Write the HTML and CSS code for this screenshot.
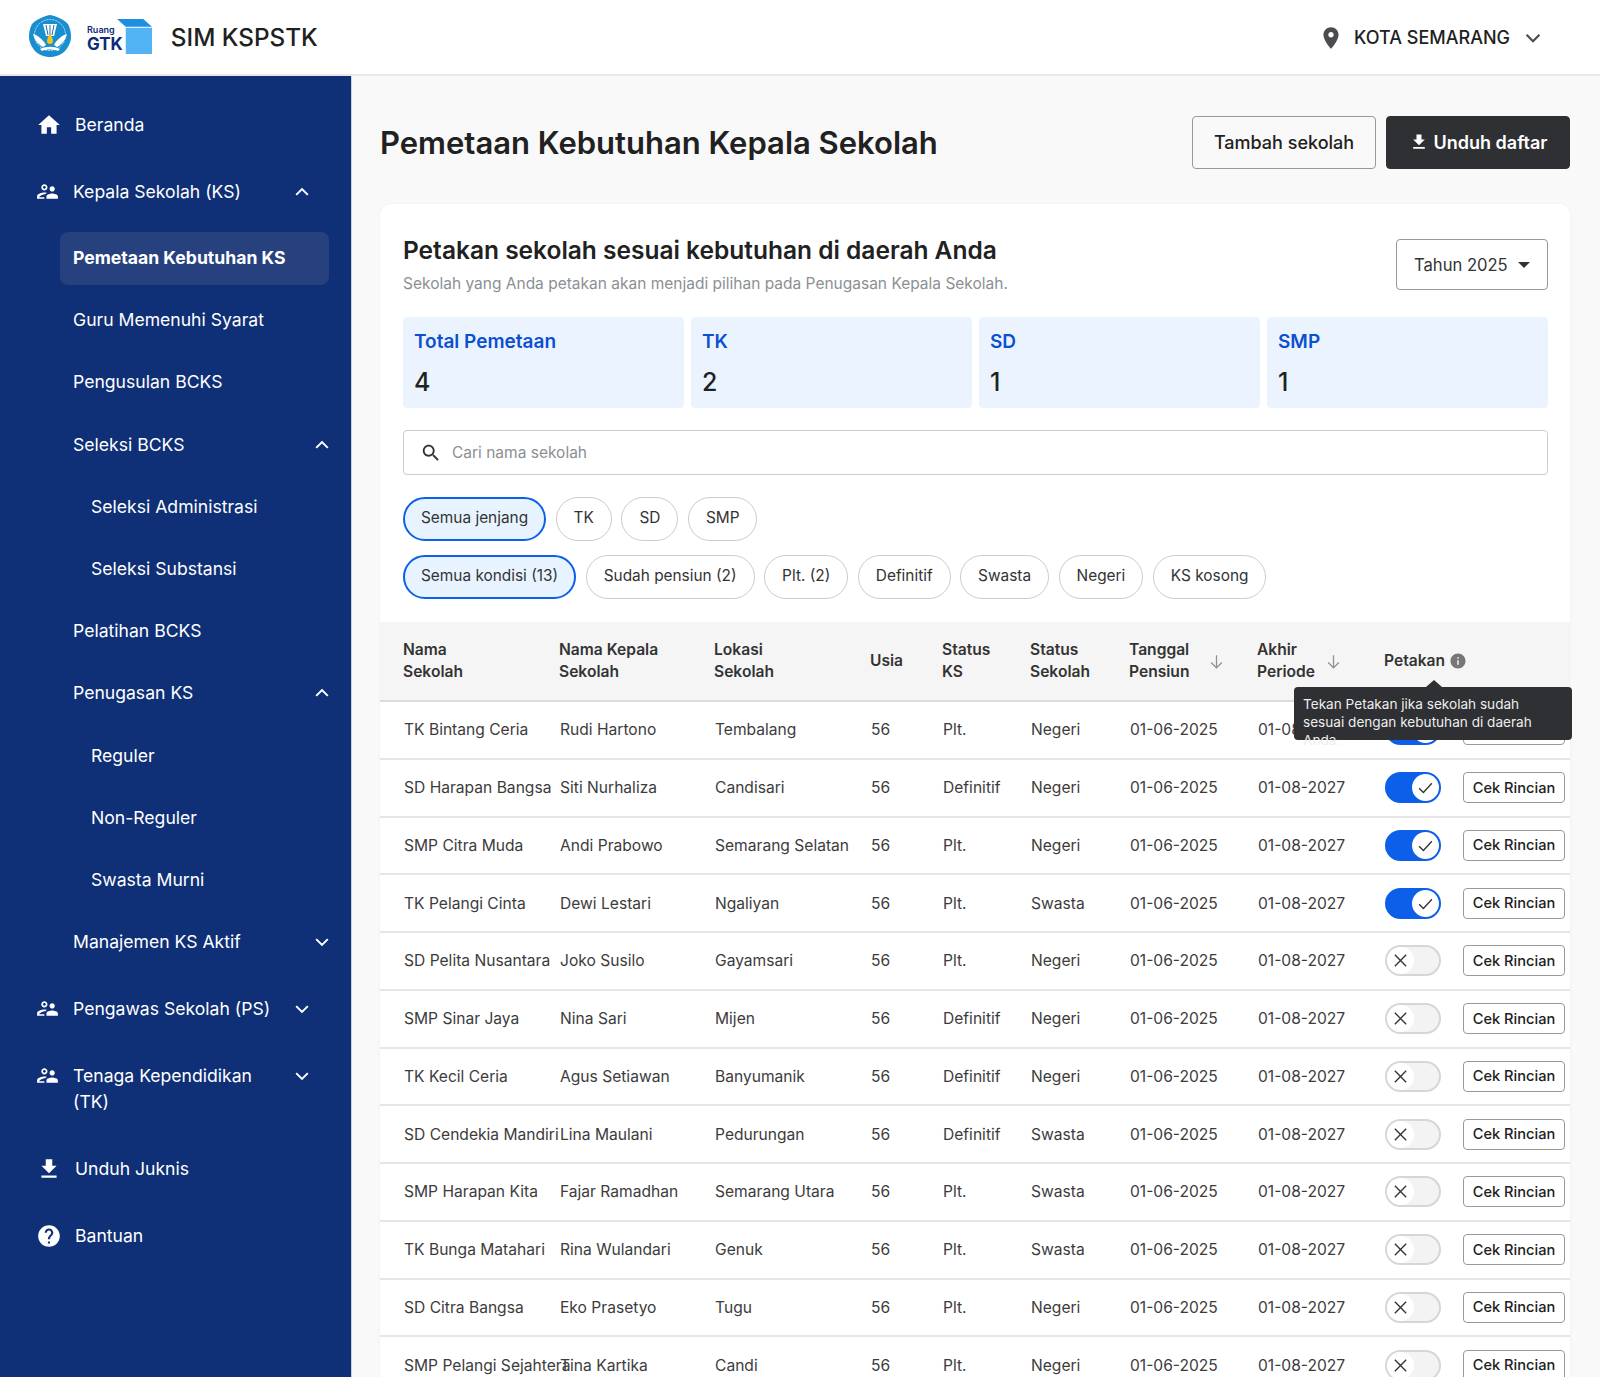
FILE: index.html
```html
<!DOCTYPE html>
<html lang="id">
<head>
    <meta charset="UTF-8">
    <meta name="viewport" content="width=device-width, initial-scale=1.0">
    <title>SIM KSPSTK</title>
    <link rel="stylesheet" href="styles.css">
</head>
<body>
    <svg class="sprites" aria-hidden="true">
        <symbol id="i-home" viewBox="0 0 24 24"><path d="M10 20v-6h4v6h5v-8h3L12 3 2 12h3v8z"/></symbol>
        <symbol id="i-people" viewBox="0 0 24 24"><path fill-rule="evenodd" d="M16.5 12c1.38 0 2.49-1.12 2.49-2.5S17.88 7 16.5 7C15.12 7 14 8.12 14 9.5s1.12 2.5 2.5 2.5zM9 11c1.66 0 3-1.34 3-3s-1.34-3-3-3-3 1.34-3 3 1.34 3 3 3zm0-1.6c-.77 0-1.4-.63-1.4-1.4S8.230 6.600 9 6.600s1.400.63 1.400 1.400S9.770 9.400 9 9.400zm7.500 4.600c-1.830 0-5.500.92-5.500 2.750V19h11v-2.250c0-1.830-3.670-2.750-5.500-2.750zM9 13c-2.330 0-7 1.170-7 3.500V19h7v-1.500H4c.2-.9 2.700-2.800 5.900-2.900.4-.5.900-.9 1.470-1.320C10.500 13.100 9.660 13 9 13z"/></symbol>
        <symbol id="i-download" viewBox="0 0 24 24"><path d="M19 9h-4V3H9v6H5l7 7 7-7zM5 18v2h14v-2H5z"/></symbol>
        <symbol id="i-help" viewBox="0 0 24 24"><path d="M12 2C6.480 2 2 6.480 2 12s4.480 10 10 10 10-4.480 10-10S17.520 2 12 2zm1 17h-2v-2h2v2zm2.070-7.750l-.9.920C13.450 12.900 13 13.500 13 15h-2v-.5c0-1.100.45-2.100 1.170-2.830l1.240-1.260c.37-.36.59-.86.59-1.410 0-1.100-.9-2-2-2s-2 .9-2 2H8c0-2.210 1.790-4 4-4s4 1.790 4 4c0 .88-.36 1.680-.93 2.250z"/></symbol>
        <symbol id="i-place" viewBox="0 0 24 24"><path d="M12 2C8.130 2 5 5.130 5 9c0 5.250 7 13 7 13s7-7.750 7-13c0-3.870-3.130-7-7-7zm0 9.500c-1.380 0-2.500-1.120-2.500-2.500s1.120-2.500 2.500-2.500 2.500 1.120 2.500 2.500-1.120 2.500-2.500 2.500z"/></symbol>
        <symbol id="i-search" viewBox="0 0 24 24"><path d="M15.500 14h-.79l-.28-.27C15.410 12.590 16 11.110 16 9.500 16 5.910 13.090 3 9.500 3S3 5.910 3 9.500 5.910 16 9.500 16c1.610 0 3.090-.59 4.230-1.570l.27.28v.79l5 4.990L20.490 19l-4.990-5zm-6 0C7.010 14 5 11.990 5 9.500S7.010 5 9.500 5 14 7.010 14 9.500 11.990 14 9.500 14z"/></symbol>
        <symbol id="i-info" viewBox="0 0 24 24"><path d="M12 2C6.480 2 2 6.480 2 12s4.480 10 10 10 10-4.480 10-10S17.520 2 12 2zm1 15h-2v-6h2v6zm0-8h-2V7h2v2z"/></symbol>
        <symbol id="i-up" viewBox="0 0 24 24"><path d="M5 15.500l7-7 7 7" fill="none" stroke="currentColor" stroke-width="2.400"/></symbol>
        <symbol id="i-down" viewBox="0 0 24 24"><path d="M5 8.500l7 7 7-7" fill="none" stroke="currentColor" stroke-width="2.400"/></symbol>
        <symbol id="i-arrow" viewBox="0 0 24 24"><path d="M12 3v18M4.500 13.500L12 21l7.500-7.500" fill="none" stroke="currentColor" stroke-width="1.800"/></symbol>
        <symbol id="i-check" viewBox="0 0 24 24"><path d="M3 13l6 6L21 6" fill="none" stroke="currentColor" stroke-width="1.900"/></symbol>
        <symbol id="i-x" viewBox="0 0 24 24"><path d="M4 4l16 16M20 4L4 20" fill="none" stroke="currentColor" stroke-width="1.900"/></symbol>
    </svg>

    <header class="topbar">
        <svg class="emblem" viewBox="0 0 42 42">
            <path d="M21 0c3 0 13 4 17 8 3 3 4 10 4 14 0 5-3 11-7 15-3 3-10 5-14 5s-11-2-14-5C3 33 0 27 0 22c0-4 1-11 4-14C8 4 18 0 21 0z" fill="#1a8fd0"/>
            <circle cx="21" cy="20" r="15.500" fill="none" stroke="#bfe2f5" stroke-width="1" stroke-dasharray="2 1"/>
            <path d="M14 9h14l-3 12h-8z" fill="#fff"/>
            <path d="M17 10l2 10M21 10v10M25 10l-2 10" stroke="#1a6fb0" stroke-width="1"/>
            <path d="M4 19c4 1 10 5 13 11l-3 2C10 30 6 26 4 19zM38 19c-4 1-10 5-13 11l3 2c4-2 8-6 10-13z" fill="#fff"/>
            <path d="M21 19c2 3 3 5 3 7a3 3 0 0 1-6 0c0-2 1-4 3-7z" fill="#f5c518"/>
            <path d="M11 34c6-3 14-3 20 0l-2 2c-5-2-11-2-16 0z" fill="#fff"/>
        </svg>
        <div class="gtk-logo">
            <div class="gtk-words">
                <span class="gtk-ruang">Ruang</span>
                <span class="gtk-name">GTK</span>
            </div>
            <svg class="gtk-box" viewBox="0 0 36 36">
                <path d="M9 9h27v27H9z" fill="#52b3f5"/>
                <path d="M0 0h27l9 8H9z" fill="#1c8fe0"/>
            </svg>
        </div>
        <div class="app-name">SIM KSPSTK</div>
        <div class="region">
            <svg class="region-pin"><use href="#i-place"/></svg>
            <span>KOTA SEMARANG</span>
            <svg class="region-chev"><use href="#i-down"/></svg>
        </div>
    </header>

    <div class="layout">
        <nav class="sidebar">
            <a class="nav-top nav-plain"><svg class="nav-icon"><use href="#i-home"/></svg><span>Beranda</span></a>
            <a class="nav-top"><svg class="nav-icon-sm"><use href="#i-people"/></svg><span>Kepala Sekolah (KS)</span><svg class="chev"><use href="#i-up"/></svg></a>
            <div class="nav-sub">
                <a class="nav-item active">Pemetaan Kebutuhan KS</a>
                <a class="nav-item">Guru Memenuhi Syarat</a>
                <a class="nav-item">Pengusulan BCKS</a>
                <a class="nav-item">Seleksi BCKS<svg class="chev"><use href="#i-up"/></svg></a>
                <a class="nav-item nested">Seleksi Administrasi</a>
                <a class="nav-item nested">Seleksi Substansi</a>
                <a class="nav-item">Pelatihan BCKS</a>
                <a class="nav-item">Penugasan KS<svg class="chev"><use href="#i-up"/></svg></a>
                <a class="nav-item nested">Reguler</a>
                <a class="nav-item nested">Non-Reguler</a>
                <a class="nav-item nested">Swasta Murni</a>
                <a class="nav-item">Manajemen KS Aktif<svg class="chev"><use href="#i-down"/></svg></a>
            </div>
            <a class="nav-top"><svg class="nav-icon-sm"><use href="#i-people"/></svg><span>Pengawas Sekolah (PS)</span><svg class="chev"><use href="#i-down"/></svg></a>
            <a class="nav-top nav-wrap"><svg class="nav-icon-sm"><use href="#i-people"/></svg><span>Tenaga Kependidikan (TK)</span><svg class="chev"><use href="#i-down"/></svg></a>
            <a class="nav-top nav-plain"><svg class="nav-icon"><use href="#i-download"/></svg><span>Unduh Juknis</span></a>
            <a class="nav-top nav-plain"><svg class="nav-icon"><use href="#i-help"/></svg><span>Bantuan</span></a>
        </nav>

        <main class="content">
            <div class="page-head">
                <h1>Pemetaan Kebutuhan Kepala Sekolah</h1>
                <div class="page-actions">
                    <button class="btn">Tambah sekolah</button>
                    <button class="btn btn-dark"><svg class="btn-icon"><use href="#i-download"/></svg>Unduh daftar</button>
                </div>
            </div>

            <section class="card">
                <div class="card-pad">
                    <div class="card-head">
                        <div>
                            <h2>Petakan sekolah sesuai kebutuhan di daerah Anda</h2>
                            <p class="card-sub">Sekolah yang Anda petakan akan menjadi pilihan pada Penugasan Kepala Sekolah.</p>
                        </div>
                        <div class="year-select">Tahun 2025<span class="caret"></span></div>
                    </div>

                    <div class="stats">
                        <div class="stat"><div class="stat-label">Total Pemetaan</div><div class="stat-value">4</div></div>
                        <div class="stat"><div class="stat-label">TK</div><div class="stat-value">2</div></div>
                        <div class="stat"><div class="stat-label">SD</div><div class="stat-value">1</div></div>
                        <div class="stat"><div class="stat-label">SMP</div><div class="stat-value">1</div></div>
                    </div>

                    <div class="search"><svg class="search-icon"><use href="#i-search"/></svg><span>Cari nama sekolah</span></div>

                    <div class="chips">
                        <span class="chip selected">Semua jenjang</span>
                        <span class="chip">TK</span>
                        <span class="chip">SD</span>
                        <span class="chip">SMP</span>
                    </div>
                    <div class="chips">
                        <span class="chip selected">Semua kondisi (13)</span>
                        <span class="chip">Sudah pensiun (2)</span>
                        <span class="chip">Plt. (2)</span>
                        <span class="chip">Definitif</span>
                        <span class="chip">Swasta</span>
                        <span class="chip">Negeri</span>
                        <span class="chip">KS kosong</span>
                    </div>
                </div>

                <table class="schools">
                    <colgroup>
                        <col class="c1"><col class="c2"><col class="c3"><col class="c4"><col class="c5">
                        <col class="c6"><col class="c7"><col class="c8"><col class="c9"><col class="c10">
                    </colgroup>
                    <thead>
                        <tr>
                            <th>Nama<br>Sekolah</th>
                            <th>Nama Kepala<br>Sekolah</th>
                            <th>Lokasi<br>Sekolah</th>
                            <th>Usia</th>
                            <th>Status<br>KS</th>
                            <th>Status<br>Sekolah</th>
                            <th><div class="th-sort sort-wide"><span>Tanggal<br>Pensiun</span><svg class="sort"><use href="#i-arrow"/></svg></div></th>
                            <th><div class="th-sort"><span>Akhir<br>Periode</span><svg class="sort"><use href="#i-arrow"/></svg></div></th>
                            <th colspan="2" class="th-petakan">
                                <div class="th-info">Petakan<svg class="info"><use href="#i-info"/></svg></div>
                                <div class="tooltip">Tekan Petakan jika sekolah sudah sesuai dengan kebutuhan di daerah Anda.</div>
                            </th>
                        </tr>
                    </thead>
                    <tbody>
                        <tr><td>TK Bintang Ceria</td><td>Rudi Hartono</td><td>Tembalang</td><td>56</td><td>Plt.</td><td>Negeri</td><td>01-06-2025</td><td>01-08-2027</td><td><span class="toggle on"><span class="knob"><svg><use href="#i-check"/></svg></span></span></td><td><button class="btn-row">Cek Rincian</button></td></tr>
                        <tr><td>SD Harapan Bangsa</td><td>Siti Nurhaliza</td><td>Candisari</td><td>56</td><td>Definitif</td><td>Negeri</td><td>01-06-2025</td><td>01-08-2027</td><td><span class="toggle on"><span class="knob"><svg><use href="#i-check"/></svg></span></span></td><td><button class="btn-row">Cek Rincian</button></td></tr>
                        <tr><td>SMP Citra Muda</td><td>Andi Prabowo</td><td>Semarang Selatan</td><td>56</td><td>Plt.</td><td>Negeri</td><td>01-06-2025</td><td>01-08-2027</td><td><span class="toggle on"><span class="knob"><svg><use href="#i-check"/></svg></span></span></td><td><button class="btn-row">Cek Rincian</button></td></tr>
                        <tr><td>TK Pelangi Cinta</td><td>Dewi Lestari</td><td>Ngaliyan</td><td>56</td><td>Plt.</td><td>Swasta</td><td>01-06-2025</td><td>01-08-2027</td><td><span class="toggle on"><span class="knob"><svg><use href="#i-check"/></svg></span></span></td><td><button class="btn-row">Cek Rincian</button></td></tr>
                        <tr><td>SD Pelita Nusantara</td><td>Joko Susilo</td><td>Gayamsari</td><td>56</td><td>Plt.</td><td>Negeri</td><td>01-06-2025</td><td>01-08-2027</td><td><span class="toggle"><span class="knob"><svg><use href="#i-x"/></svg></span></span></td><td><button class="btn-row">Cek Rincian</button></td></tr>
                        <tr><td>SMP Sinar Jaya</td><td>Nina Sari</td><td>Mijen</td><td>56</td><td>Definitif</td><td>Negeri</td><td>01-06-2025</td><td>01-08-2027</td><td><span class="toggle"><span class="knob"><svg><use href="#i-x"/></svg></span></span></td><td><button class="btn-row">Cek Rincian</button></td></tr>
                        <tr><td>TK Kecil Ceria</td><td>Agus Setiawan</td><td>Banyumanik</td><td>56</td><td>Definitif</td><td>Negeri</td><td>01-06-2025</td><td>01-08-2027</td><td><span class="toggle"><span class="knob"><svg><use href="#i-x"/></svg></span></span></td><td><button class="btn-row">Cek Rincian</button></td></tr>
                        <tr><td>SD Cendekia Mandiri</td><td>Lina Maulani</td><td>Pedurungan</td><td>56</td><td>Definitif</td><td>Swasta</td><td>01-06-2025</td><td>01-08-2027</td><td><span class="toggle"><span class="knob"><svg><use href="#i-x"/></svg></span></span></td><td><button class="btn-row">Cek Rincian</button></td></tr>
                        <tr><td>SMP Harapan Kita</td><td>Fajar Ramadhan</td><td>Semarang Utara</td><td>56</td><td>Plt.</td><td>Swasta</td><td>01-06-2025</td><td>01-08-2027</td><td><span class="toggle"><span class="knob"><svg><use href="#i-x"/></svg></span></span></td><td><button class="btn-row">Cek Rincian</button></td></tr>
                        <tr><td>TK Bunga Matahari</td><td>Rina Wulandari</td><td>Genuk</td><td>56</td><td>Plt.</td><td>Swasta</td><td>01-06-2025</td><td>01-08-2027</td><td><span class="toggle"><span class="knob"><svg><use href="#i-x"/></svg></span></span></td><td><button class="btn-row">Cek Rincian</button></td></tr>
                        <tr><td>SD Citra Bangsa</td><td>Eko Prasetyo</td><td>Tugu</td><td>56</td><td>Plt.</td><td>Negeri</td><td>01-06-2025</td><td>01-08-2027</td><td><span class="toggle"><span class="knob"><svg><use href="#i-x"/></svg></span></span></td><td><button class="btn-row">Cek Rincian</button></td></tr>
                        <tr><td>SMP Pelangi Sejahtera</td><td>Tina Kartika</td><td>Candi</td><td>56</td><td>Plt.</td><td>Negeri</td><td>01-06-2025</td><td>01-08-2027</td><td><span class="toggle"><span class="knob"><svg><use href="#i-x"/></svg></span></span></td><td><button class="btn-row">Cek Rincian</button></td></tr>
                    </tbody>
                </table>
            </section>
        </main>
    </div>
</body>
</html>
```

FILE: styles.css
```css
* {
    box-sizing: border-box;
}
html, body {
    height: 100%;
    margin: 0;
    overflow: hidden;
}
body {
    font-family: Inter, "Noto Sans", sans-serif;
    color: #212121;
    background-color: #f9f9f9;
    display: flex;
    flex-direction: column;
}
svg {
    fill: currentColor;
    flex: none;
}
.sprites {
    display: none;
}

/* top bar */
.topbar {
    height: 76px;
    flex: none;
    display: flex;
    align-items: center;
    background-color: #fff;
    border-bottom: 2px solid #e8e8e8;
    padding: 0 56px 0 29px;
}
.emblem {
    width: 42px;
    height: 42px;
    margin-top: -2px;
}
.gtk-logo {
    display: flex;
    margin: -2px 0 0 16px;
    align-items: flex-end;
}
.gtk-words {
    display: flex;
    flex-direction: column;
    color: #0e2a78;
    font-weight: 700;
    margin-bottom: 1px;
}
.gtk-ruang {
    font-size: 9px;
    line-height: 10px;
    font-weight: 600;
}
.gtk-name {
    font-size: 17px;
    line-height: 18px;
}
.gtk-box {
    width: 35px;
    height: 35px;
    margin-left: -6px;
}
.app-name {
    margin-left: 19px;
    font-size: 24.300px;
    font-weight: 500;
}
.region {
    margin: 1px 0 0 auto;
    display: flex;
    align-items: center;
    font-size: 18px;
    font-weight: 500;
}
.region-pin {
    width: 26px;
    height: 26px;
    color: #4a4c50;
    margin-right: 10px;
}
.region-chev {
    width: 22px;
    height: 22px;
    color: #4a4c50;
    margin-left: 12px;
}

.layout {
    flex: 1;
    display: flex;
    min-height: 0;
}

/* sidebar */
.sidebar {
    width: 352px;
    flex: none;
    background-color: #0f2f76;
    border-right: 1px solid #c9d0e0;
    padding: 18px 22px 0 35px;
    color: #fff;
    font-size: 17.600px;
    line-height: 26px;
}
.nav-top {
    display: flex;
    align-items: flex-start;
    padding: 18px 0;
    margin-bottom: 5px;
}
.nav-top span {
    flex: 1;
    margin-left: 13px;
}
.nav-wrap span {
    padding-right: 30px;
}
.nav-icon {
    width: 26px;
    height: 26px;
    margin-left: 1px;
}
.nav-icon-sm {
    width: 25px;
    height: 25px;
}
.chev {
    width: 20px;
    height: 20px;
    margin: 3px 17px 0 0;
}
.nav-sub {
    margin: 8.500px 0 0 25px;
}
.nav-item {
    display: flex;
    align-items: center;
    justify-content: space-between;
    height: 53.200px;
    margin-bottom: 9px;
    padding: 0 0 0 13px;
    border-radius: 8px;
}
.nav-item .chev {
    margin: 0 -3px 0 0;
}
.nav-item.nested {
    padding-left: 31px;
}
.nav-item.active {
    background-color: #27417f;
    font-weight: 700;
}

/* main content */
.content {
    flex: 1;
    min-width: 0;
    padding: 40px 30px 0 28px;
}
.page-head {
    display: flex;
    align-items: center;
    justify-content: space-between;
    height: 52px;
}
h1 {
    margin: 0;
    font-size: 31px;
    font-weight: 600;
}
.page-actions {
    display: flex;
    gap: 10px;
}
.btn {
    height: 53px;
    width: 184px;
    font: 500 18px Inter, sans-serif;
    color: #212121;
    background-color: transparent;
    border: 1px solid #999;
    border-radius: 4px;
    display: flex;
    align-items: center;
    justify-content: center;
}
.btn-dark {
    background-color: #2f3033;
    border-color: #2f3033;
    color: #fff;
    font-weight: 600;
}
.btn-icon {
    width: 20px;
    height: 20px;
    margin-right: 5px;
}
.card {
    margin-top: 36px;
    background-color: #fff;
    border-radius: 10px;
    box-shadow: 0 0 2px rgba(0, 0, 0, 0.08);
}
.card-pad {
    padding: 31px 22px 0 23px;
}
.card-head {
    display: flex;
    justify-content: space-between;
}
h2 {
    margin: 0;
    font-size: 24.500px;
    line-height: 30px;
    font-weight: 600;
}
.card-sub {
    margin: 7px 0 0;
    font-size: 15.500px;
    line-height: 24px;
    color: #8c8f93;
}
.year-select {
    width: 152px;
    height: 51px;
    margin-top: 4px;
    border: 1px solid #999;
    border-radius: 4px;
    font-size: 16.600px;
    padding-left: 17px;
    display: flex;
    align-items: center;
    color: #333;
}
.caret {
    margin-left: 10px;
    border-left: 6px solid transparent;
    border-right: 6px solid transparent;
    border-top: 6px solid #333;
}
.stats {
    display: grid;
    grid-template-columns: repeat(4, 1fr);
    gap: 7px;
    margin-top: 21px;
}
.stat {
    height: 91px;
    background-color: #ebf4fe;
    border-radius: 4px;
    padding: 12px 11px;
}
.stat-label {
    font-size: 19px;
    line-height: 26px;
    font-weight: 600;
    color: #0b50d0;
}
.stat-value {
    margin-top: 12px;
    font-size: 25px;
    line-height: 30px;
    font-weight: 500;
}
.search {
    margin-top: 22px;
    height: 45px;
    border: 1px solid #ccc;
    border-radius: 4px;
    display: flex;
    align-items: center;
    padding-left: 16px;
    font-size: 15.500px;
    color: #8c8f93;
}
.search-icon {
    width: 22px;
    height: 22px;
    color: #333;
    margin-right: 10px;
}
.chips {
    display: flex;
    gap: 9.500px;
    margin-top: 14px;
}
.search + .chips {
    margin-top: 22px;
}
.chip {
    height: 44px;
    border: 1px solid #ccc;
    border-radius: 22px;
    padding: 0 17px 3px;
    display: flex;
    align-items: center;
    font-size: 15.400px;
    color: #333;
}
.chip.selected {
    background-color: #e7f4ff;
    border: 2px solid #0b5fe8;
    padding: 0 16px 3px;
}

/* table */
.schools {
    margin-top: 23px;
    width: 100%;
    table-layout: fixed;
    border-collapse: collapse;
    font-size: 15.600px;
}
.c1 { width: 179px; }
.c2 { width: 155px; }
.c3 { width: 156px; }
.c4 { width: 72px; }
.c5 { width: 88px; }
.c6 { width: 99px; }
.c7 { width: 128px; }
.c8 { width: 127px; }
.c9 { width: 78px; }
.c10 { width: 108px; }
.schools th {
    height: 79px;
    padding: 0;
    text-align: left;
    font-weight: 600;
    line-height: 22.500px;
    background-color: #f5f5f5;
    border-bottom: 2px solid #dcdcdc;
    color: #333;
}
.schools th:first-child {
    padding-left: 23px;
}
.schools td:first-child {
    padding-left: 24px;
}
.schools td {
    height: 57.750px;
    padding: 0 0 0 1px;
    white-space: nowrap;
    border-bottom: 2px solid #e6e6e6;
    color: #3c3c3c;
}
.th-sort {
    display: flex;
    align-items: center;
    width: 85px;
    justify-content: space-between;
}
.sort-wide {
    width: 96px;
}
.sort {
    width: 17px;
    height: 17px;
    color: #8c8f93;
}
.th-petakan {
    position: relative;
}
.th-info {
    display: flex;
    align-items: center;
    gap: 4px;
}
.info {
    width: 18px;
    height: 18px;
    color: #777;
}
.tooltip {
    position: absolute;
    top: 65px;
    right: -2px;
    width: 278px;
    height: 53px;
    padding: 8px 9px;
    border-radius: 4px;
    background-color: #2f3033;
    color: #eee;
    font-size: 13.600px;
    font-weight: 400;
    line-height: 18px;
    z-index: 2;
}
.tooltip::before {
    content: "";
    position: absolute;
    top: -7px;
    left: 132px;
    border-left: 8px solid transparent;
    border-right: 8px solid transparent;
    border-bottom: 7px solid #2f3033;
}
.toggle {
    display: block;
    width: 56px;
    height: 31px;
    border-radius: 16px;
    border: 2px solid #d6d6d6;
    background-color: #f3f3f3;
    position: relative;
}
.toggle.on {
    border-color: #0b5fe8;
    background-color: #0b5fe8;
}
.knob {
    position: absolute;
    top: 0;
    left: 0;
    width: 27px;
    height: 27px;
    border-radius: 50%;
    background-color: #fff;
    display: flex;
    align-items: center;
    justify-content: center;
    color: #333;
}
.toggle.on .knob {
    left: 25px;
}
.knob svg {
    width: 17px;
    height: 17px;
}
.btn-row {
    width: 102px;
    height: 31px;
    display: block;
    padding: 0;
    font: 500 14.600px Inter, sans-serif;
    color: #212121;
    background-color: #fff;
    border: 1px solid #999;
    border-radius: 4px;
}
```
